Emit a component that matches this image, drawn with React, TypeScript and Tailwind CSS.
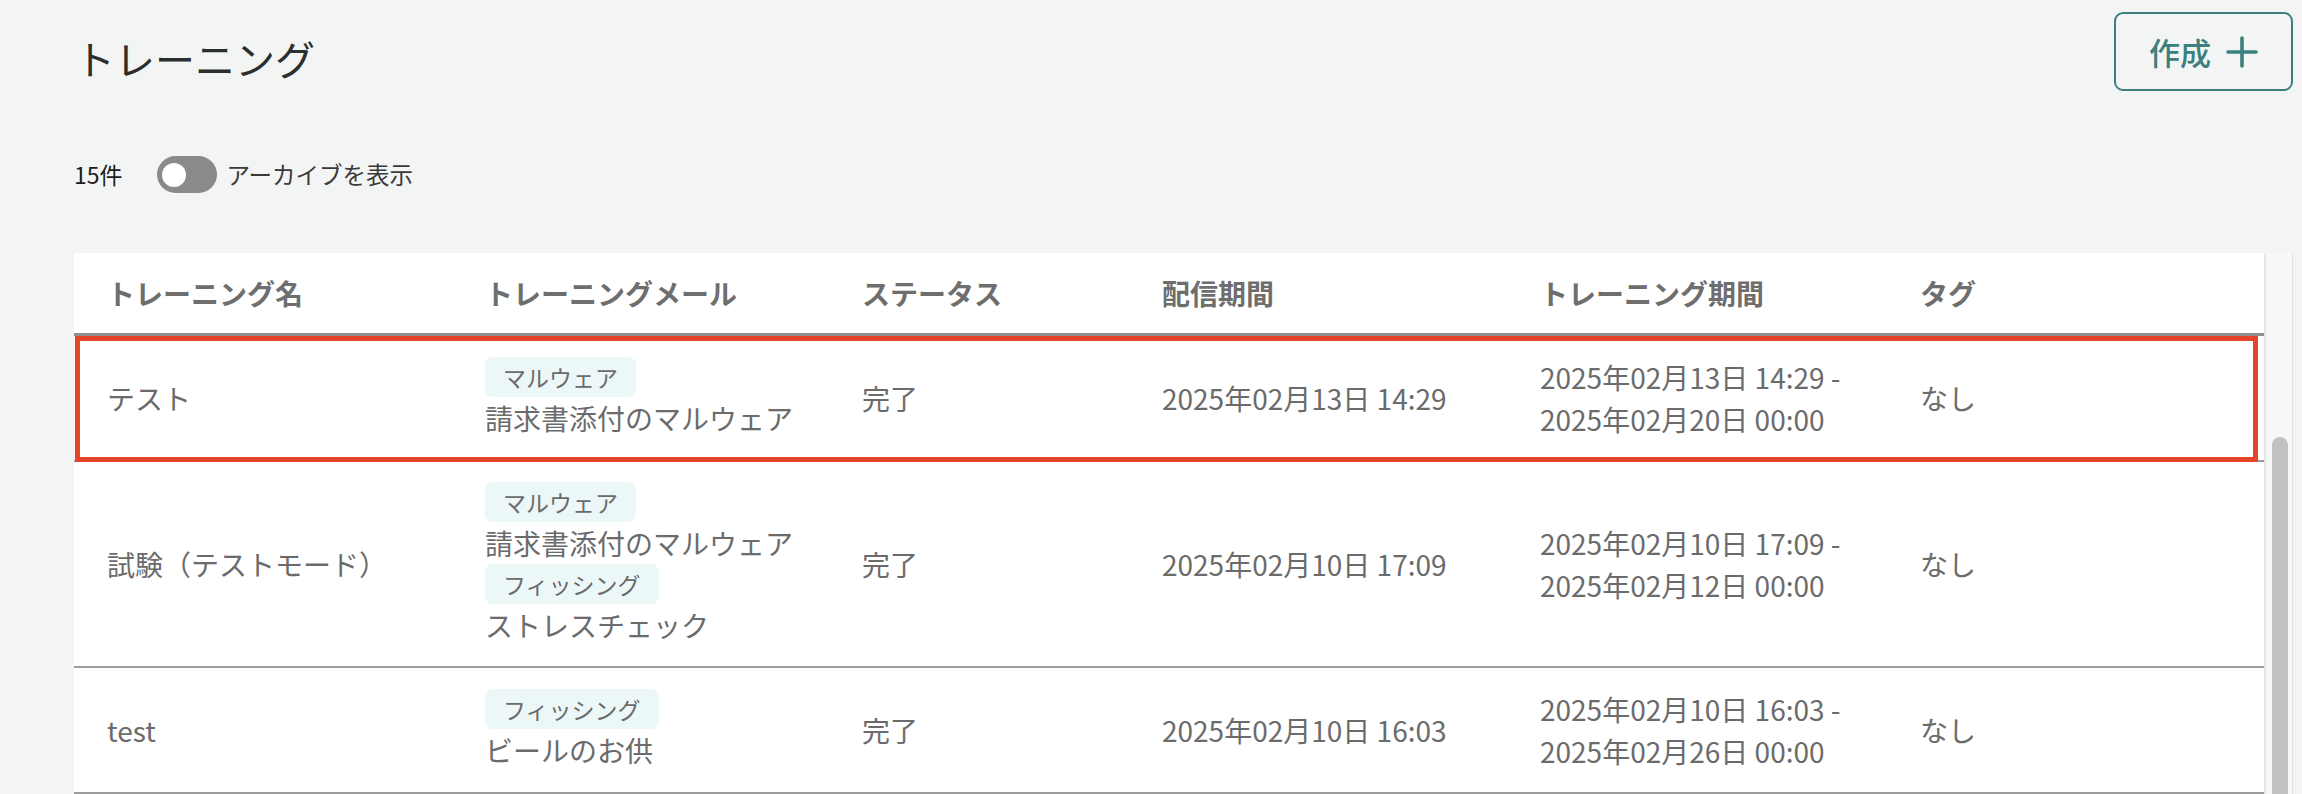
import React from "react";

type Mail = { tag: string; name: string };
type Row = {
  name: string;
  mails: Mail[];
  status: string;
  send: string;
  period: [string, string];
  tag: string;
  highlight?: boolean;
};

const rows: Row[] = [
  {
    name: "テスト",
    mails: [{ tag: "マルウェア", name: "請求書添付のマルウェア" }],
    status: "完了",
    send: "2025年02月13日 14:29",
    period: ["2025年02月13日 14:29 -", "2025年02月20日 00:00"],
    tag: "なし",
    highlight: true,
  },
  {
    name: "試験（テストモード）",
    mails: [
      { tag: "マルウェア", name: "請求書添付のマルウェア" },
      { tag: "フィッシング", name: "ストレスチェック" },
    ],
    status: "完了",
    send: "2025年02月10日 17:09",
    period: ["2025年02月10日 17:09 -", "2025年02月12日 00:00"],
    tag: "なし",
  },
  {
    name: "test",
    mails: [{ tag: "フィッシング", name: "ビールのお供" }],
    status: "完了",
    send: "2025年02月10日 16:03",
    period: ["2025年02月10日 16:03 -", "2025年02月26日 00:00"],
    tag: "なし",
  },
];

const grid = "grid grid-cols-[378px_377px_300px_378px_380px_1fr]";

export default function App() {
  return (
    <div
      className="h-[794px] overflow-hidden bg-[#f3f5f4] pl-[74px] pr-[9px] pt-[12px]"
      style={{ fontFamily: '"Noto Sans CJK JP", "Noto Sans", sans-serif' }}
    >
      {/* Top bar */}
      <div className="flex items-start justify-between">
        <h1 className="ml-[1px] mt-[17px] text-[40px] leading-[58px] font-normal text-[#2a2e2d]">
          トレーニング
        </h1>
        <button className="flex h-[79px] w-[179px] items-center justify-center gap-[15px] rounded-[9px] border-2 border-[#3b807d] text-[31px] font-medium leading-none text-[#3b807d]">
          <span>作成</span>
          <svg width="32" height="32" viewBox="0 0 32 32" fill="none">
            <path
              d="M16 2v28M2 16h28"
              stroke="#3b807d"
              strokeWidth="3.6"
              strokeLinecap="round"
            />
          </svg>
        </button>
      </div>

      {/* Count + toggle */}
      <div className="mt-[65px] flex h-[37px] items-center">
        <span className="text-[23px] leading-none text-[#1c1c1c]">15件</span>
        <div className="ml-[34px] flex h-[37px] w-[60px] items-center rounded-full bg-[#8a8a8a] pl-[5px]">
          <div className="h-[24px] w-[24px] rounded-full bg-white" />
        </div>
        <span className="ml-[10px] text-[23.5px] leading-none text-[#3a3a3a]">
          アーカイブを表示
        </span>
      </div>

      {/* Table card */}
      <div className="mt-[60px] flex">
        <div className="flex-1 bg-white">
          <div
            className={`${grid} h-[83px] items-center border-b-[3px] border-[#8e8e8e] text-[28px] font-bold text-[#6e6e6e]`}
          >
            {["トレーニング名", "トレーニングメール", "ステータス", "配信期間", "トレーニング期間", "タグ"].map(
              (h) => (
                <div key={h} className="pl-[33px]">
                  {h}
                </div>
              )
            )}
          </div>
          {rows.map((r, i) => (
            <div
              key={i}
              className={`${grid} relative items-center border-b-2 border-[#9c9c9c] py-[20px] text-[28px] leading-[42px] text-[#6b6b6b]`}
            >
              <div className="pl-[33px]">{r.name}</div>
              <div className="flex flex-col items-start pl-[33px]">
                {r.mails.map((m, j) => (
                  <React.Fragment key={j}>
                    <span className="rounded-[8px] bg-[#ecf8f8] px-[18px] py-[3px] text-[23px] leading-[34px] text-[#6b6b6b]">
                      {m.tag}
                    </span>
                    <span>{m.name}</span>
                  </React.Fragment>
                ))}
              </div>
              <div className="pl-[33px]">{r.status}</div>
              <div className="pl-[33px]">{r.send}</div>
              <div className="flex flex-col pl-[33px]">
                <span>{r.period[0]}</span>
                <span>{r.period[1]}</span>
              </div>
              <div className="pl-[33px]">{r.tag}</div>
              {r.highlight && (
                <div className="pointer-events-none absolute bottom-[-2px] left-[1px] right-[6px] top-0 border-[5px] border-[#e64428]" />
              )}
            </div>
          ))}
          <div className="h-[40px]" />
        </div>
        {/* Scrollbar */}
        <div className="w-[29px] border-l-2 border-r border-l-[#e6e6e6] border-r-[#e2e2e2] bg-[#f8f8f8]">
          <div className="ml-[6px] mt-[184px] h-[600px] w-[16px] rounded-full bg-[#c1c1c1]" />
        </div>
      </div>
    </div>
  );
}
